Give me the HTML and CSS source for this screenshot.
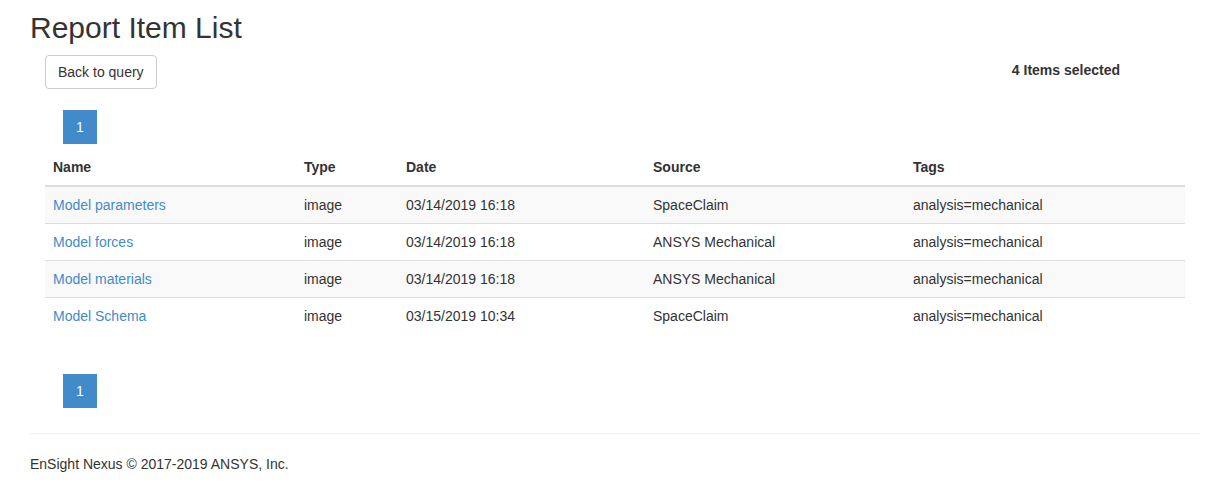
FILE: index.html
```html
<!DOCTYPE html>
<html>
<head>
<meta charset="utf-8">
<title>Report Item List</title>
<link rel="stylesheet" href="styles.css">
</head>
<body>
<div class="page">
  <h1 class="title">Report Item List</h1>
  <div class="inner">
    <div class="toolbar">
      <button class="btn">Back to query</button>
      <span class="selected">4 Items selected</span>
    </div>
    <ul class="pagination pag-top"><li class="active">1</li></ul>
    <table class="items">
      <colgroup>
        <col style="width:251px"><col style="width:102px"><col style="width:247px"><col style="width:260px"><col style="width:280px">
      </colgroup>
      <thead>
        <tr><th>Name</th><th>Type</th><th>Date</th><th>Source</th><th>Tags</th></tr>
      </thead>
      <tbody>
        <tr><td><a href="#">Model parameters</a></td><td>image</td><td>03/14/2019 16:18</td><td>SpaceClaim</td><td>analysis=mechanical</td></tr>
        <tr><td><a href="#">Model forces</a></td><td>image</td><td>03/14/2019 16:18</td><td>ANSYS Mechanical</td><td>analysis=mechanical</td></tr>
        <tr><td><a href="#">Model materials</a></td><td>image</td><td>03/14/2019 16:18</td><td>ANSYS Mechanical</td><td>analysis=mechanical</td></tr>
        <tr><td><a href="#">Model Schema</a></td><td>image</td><td>03/15/2019 10:34</td><td>SpaceClaim</td><td>analysis=mechanical</td></tr>
      </tbody>
    </table>
    <ul class="pagination pag-bottom"><li class="active">1</li></ul>
  </div>
  <hr class="rule">
  <footer class="footer">EnSight Nexus © 2017-2019 ANSYS, Inc.</footer>
</div>
</body>
</html>
```
FILE: styles.css
```css
html, body {
  margin: 0;
  padding: 0;
  background: #fff;
}
body {
  font-family: "Liberation Sans", Arial, Helvetica, sans-serif;
  font-size: 14px;
  line-height: 20px;
  color: #333;
}
.page {
  width: 1170px;
  padding-left: 30px;
}
.title {
  margin: 11px 0 0;
  font-size: 30px;
  line-height: 33px;
  font-weight: 500;
  color: #333;
}
.inner {
  padding: 0 15px;
}
.toolbar {
  margin-top: 11px;
  display: flex;
  align-items: center;
  justify-content: space-between;
  padding-right: 65px;
}
.btn {
  height: 34px;
  padding: 6px 12px;
  font-family: inherit;
  font-size: 14px;
  line-height: 20px;
  color: #333;
  background: #fff;
  border: 1px solid #ccc;
  border-radius: 4px;
}
.selected {
  font-weight: bold;
  margin-top: -4px;
}
.pagination {
  list-style: none;
  margin: 0;
  padding: 0 0 0 18px;
  display: flex;
}
.pagination li {
  width: 34px;
  height: 34px;
  box-sizing: border-box;
  display: flex;
  align-items: center;
  justify-content: center;
  color: #fff;
  background: #428bca;
}
.pag-top {
  margin-top: 21px;
  margin-bottom: 5px;
}
.pag-bottom {
  margin-top: 40px;
}
.items {
  width: 1140px;
  border-collapse: collapse;
  table-layout: fixed;
}
.items th, .items td {
  padding: 8px;
  text-align: left;
  vertical-align: top;
  line-height: 20px;
}
.items th {
  font-weight: bold;
  border-bottom: 2px solid #ddd;
}
.items td {
  border-top: 1px solid #ddd;
}
.items tbody tr:first-child td {
  border-top: 0;
}
.items tbody tr:nth-child(odd) {
  background: #f9f9f9;
}
.items a {
  color: #428bca;
  text-decoration: none;
}
.rule {
  margin: 25px 0 0;
  border: 0;
  border-top: 1px solid #eee;
  height: 0;
}
.footer {
  padding-top: 20px;
}
```
